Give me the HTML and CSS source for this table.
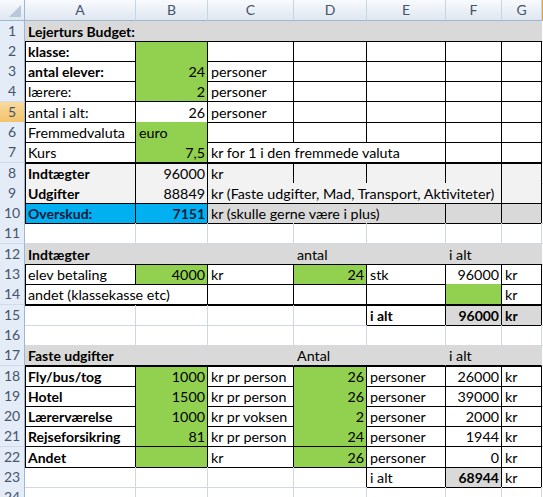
FILE: index.html
```html
<!DOCTYPE html>
<html lang="da">
<head>
<meta charset="utf-8">
<title>Lejerturs Budget</title>
<link rel="stylesheet" href="styles.css">
</head>
<body>
<div class="sheet">
  <div class="row hdr">
    <div class="corner"><span class="tri"></span></div>
    <div class="ch">A</div><div class="ch">B</div><div class="ch">C</div><div class="ch">D</div><div class="ch">E</div><div class="ch">F</div><div class="ch">G</div><div class="ch sel"></div>
  </div>

  <div class="row">
    <div class="rn">1</div>
    <div class="c gr b B nr s7">Lejerturs Budget:</div>
    <div class="h"></div>
  </div>
  <div class="row tt">
    <div class="rn">2</div>
    <div class="c L R B b">klasse:</div><div class="c g R B"></div><div class="c R B"></div><div class="c R B"></div><div class="c R B"></div><div class="c R B"></div><div class="c R B"></div>
    <div class="h"></div>
  </div>
  <div class="row">
    <div class="rn">3</div>
    <div class="c L R B b">antal elever:</div><div class="c g R B r">24</div><div class="c R B">personer</div><div class="c R B"></div><div class="c R B"></div><div class="c R B"></div><div class="c R B"></div>
    <div class="h"></div>
  </div>
  <div class="row">
    <div class="rn">4</div>
    <div class="c L R B">lærere:</div><div class="c g R B r">2</div><div class="c R B">personer</div><div class="c R B"></div><div class="c R B"></div><div class="c R B"></div><div class="c R B"></div>
    <div class="h"></div>
  </div>
  <div class="row">
    <div class="rn rsel">5</div>
    <div class="c L R B">antal i alt:</div><div class="c R B r">26</div><div class="c R B">personer</div><div class="c R B"></div><div class="c R B"></div><div class="c R B"></div><div class="c R B"></div>
    <div class="h"></div>
  </div>
  <div class="row">
    <div class="rn">6</div>
    <div class="c L R B">Fremmedvaluta</div><div class="c g R B">euro</div><div class="c R B"></div><div class="c R B"></div><div class="c R B"></div><div class="c R B"></div><div class="c R B"></div>
    <div class="h"></div>
  </div>
  <div class="row">
    <div class="rn">7</div>
    <div class="c L R B">Kurs</div><div class="c g R B r">7,5</div><div class="c R B s3">kr for 1 i den fremmede valuta</div><div class="c R B"></div><div class="c R B"></div>
    <div class="h"></div>
  </div>
  <div class="row tt">
    <div class="rn">8</div>
    <div class="c lg L R B b">Indtægter</div><div class="c lg R B r">96000</div><div class="c lg R B">kr</div><div class="c lg R B"></div><div class="c lg R B"></div><div class="c lg R B"></div><div class="c lg R B"></div>
    <div class="h"></div>
  </div>
  <div class="row">
    <div class="rn">9</div>
    <div class="c lg L R B b">Udgifter</div><div class="c lg R B r">88849</div><div class="c lg R B s4">kr (Faste udgifter, Mad, Transport, Aktiviteter)</div><div class="c lg R B"></div>
    <div class="h"></div>
  </div>
  <div class="row tt">
    <div class="rn">10</div>
    <div class="c bl L R B b">Overskud:</div><div class="c bl R B r b">7151</div><div class="c gr R B s3">kr (skulle gerne være i plus)</div><div class="c gr R B"></div><div class="c gr R B"></div>
    <div class="h"></div>
  </div>
  <div class="row">
    <div class="rn">11</div>
    <div class="c"></div><div class="c"></div><div class="c"></div><div class="c"></div><div class="c"></div><div class="c"></div><div class="c"></div>
    <div class="h"></div>
  </div>
  <div class="row">
    <div class="rn">12</div>
    <div class="c gr nr B b s3">Indtægter</div><div class="c gr nr B s2">antal</div><div class="c gr nr B s2">i alt</div>
    <div class="h"></div>
  </div>
  <div class="row tt">
    <div class="rn">13</div>
    <div class="c L R B">elev betaling</div><div class="c g R B r">4000</div><div class="c R B">kr</div><div class="c g R B r">24</div><div class="c R B">stk</div><div class="c R B r">96000</div><div class="c R B">kr</div>
    <div class="h"></div>
  </div>
  <div class="row">
    <div class="rn">14</div>
    <div class="c L R B s2">andet (klassekasse etc)</div><div class="c R B"></div><div class="c R B"></div><div class="c R B"></div><div class="c g R B"></div><div class="c R B">kr</div>
    <div class="h"></div>
  </div>
  <div class="row tt">
    <div class="rn">15</div>
    <div class="c"></div><div class="c"></div><div class="c"></div><div class="c R"></div><div class="c R B b">i alt</div><div class="c gr R B r b">96000</div><div class="c gr R B b">kr</div>
    <div class="h"></div>
  </div>
  <div class="row">
    <div class="rn">16</div>
    <div class="c"></div><div class="c"></div><div class="c"></div><div class="c"></div><div class="c"></div><div class="c"></div><div class="c"></div>
    <div class="h"></div>
  </div>
  <div class="row">
    <div class="rn">17</div>
    <div class="c gr nr B b s3">Faste udgifter</div><div class="c gr nr B s2">Antal</div><div class="c gr nr B s2">i alt</div>
    <div class="h"></div>
  </div>
  <div class="row tt">
    <div class="rn">18</div>
    <div class="c L R B b">Fly/bus/tog</div><div class="c g R B r">1000</div><div class="c R B">kr pr person</div><div class="c g R B r">26</div><div class="c R B">personer</div><div class="c R B r">26000</div><div class="c R B">kr</div>
    <div class="h"></div>
  </div>
  <div class="row">
    <div class="rn">19</div>
    <div class="c L R B b">Hotel</div><div class="c g R B r">1500</div><div class="c R B">kr pr person</div><div class="c g R B r">26</div><div class="c R B">personer</div><div class="c R B r">39000</div><div class="c R B">kr</div>
    <div class="h"></div>
  </div>
  <div class="row">
    <div class="rn">20</div>
    <div class="c L R B b">Lærerværelse</div><div class="c g R B r">1000</div><div class="c R B">kr pr voksen</div><div class="c g R B r">2</div><div class="c R B">personer</div><div class="c R B r">2000</div><div class="c R B">kr</div>
    <div class="h"></div>
  </div>
  <div class="row">
    <div class="rn">21</div>
    <div class="c L R B b">Rejseforsikring</div><div class="c g R B r">81</div><div class="c R B">kr pr person</div><div class="c g R B r">24</div><div class="c R B">personer</div><div class="c R B r">1944</div><div class="c R B">kr</div>
    <div class="h"></div>
  </div>
  <div class="row">
    <div class="rn">22</div>
    <div class="c L R B b">Andet</div><div class="c g R B"></div><div class="c R B">kr</div><div class="c g R B r">26</div><div class="c R B">personer</div><div class="c R B r">0</div><div class="c R B">kr</div>
    <div class="h"></div>
  </div>
  <div class="row tt">
    <div class="rn">23</div>
    <div class="c"></div><div class="c"></div><div class="c"></div><div class="c R"></div><div class="c R B">i alt</div><div class="c gr R B r b">68944</div><div class="c R B">kr</div>
    <div class="h"></div>
  </div>
  <div class="row">
    <div class="rn">24</div>
    <div class="c"></div><div class="c"></div><div class="c"></div><div class="c"></div><div class="c"></div><div class="c"></div><div class="c"></div>
    <div class="h"></div>
  </div>
</div>
</body>
</html>
```
FILE: styles.css
```css
html, body {
  margin: 0;
  padding: 0;
  background: #fff;
  overflow: hidden;
}
body {
  font-family: Lato, "Open Sans", sans-serif;
  font-size: 14.3px;
  color: #000;
}
.sheet {
  display: flex;
  flex-direction: column;
  width: 543px;
}
.row {
  display: grid;
  grid-template-columns: 25px 111px 72px 86px 73px 79px 56px 40px 1fr;
  height: 20.3px;
}
.row.hdr {
  height: 20.5px;
}
.corner, .ch {
  box-sizing: border-box;
  background: linear-gradient(#f8fafd, #dfe7f1);
  border-right: 1px solid #c7d4e4;
  border-bottom: 1px solid #9eb6ce;
  color: #44546b;
  text-align: center;
  line-height: 20px;
  font-size: 14px;
}
.corner {
  position: relative;
  border-right-color: #9eb6ce;
}
.tri {
  position: absolute;
  right: 3px;
  bottom: 3px;
  width: 0;
  height: 0;
  border-left: 12px solid transparent;
  border-bottom: 12px solid #b9c9db;
}
.ch.sel {
  background: linear-gradient(#f9d99f, #f2bf5e);
  border-left: 1px solid #e0a43a;
}
.rn {
  box-sizing: border-box;
  background: #e4ecf7;
  border-right: 1px solid #9eb6ce;
  border-bottom: 1px solid #cfdbea;
  color: #44546b;
  text-align: center;
  line-height: 20px;
  font-size: 14px;
}
.rn.rsel {
  background: linear-gradient(#f9d99f, #f2c46a);
  border-bottom-color: #e0a43a;
}
.c, .h {
  box-sizing: border-box;
  border-right: 1px solid #d0d7e5;
  border-bottom: 1px solid #d0d7e5;
  padding: 1px 3px 0 3px;
  line-height: 19px;
  white-space: nowrap;
  overflow: visible;
}
.c {
  --l: 0 0 0 transparent;
  --t: 0 0 0 transparent;
  box-shadow: inset var(--l), inset var(--t);
}
.L { --l: 1px 0 0 #000; }
.tt > .c { --t: 0 1px 0 #000; }
.R { border-right-color: #000; }
.B { border-bottom-color: #000; }
.nr { border-right-color: #d9d9d9; }
.g { background: #92d050; }
.gr { background: #d9d9d9; }
.lg { background: #f2f2f2; }
.bl { background: #00b0f0; color: #0d1b3a; }
.b { font-weight: 700; font-size: 14px; }
.r { text-align: right; padding-right: 2px; }
.s2 { grid-column: span 2; }
.s3 { grid-column: span 3; }
.s4 { grid-column: span 4; }
.s7 { grid-column: span 7; }
```
